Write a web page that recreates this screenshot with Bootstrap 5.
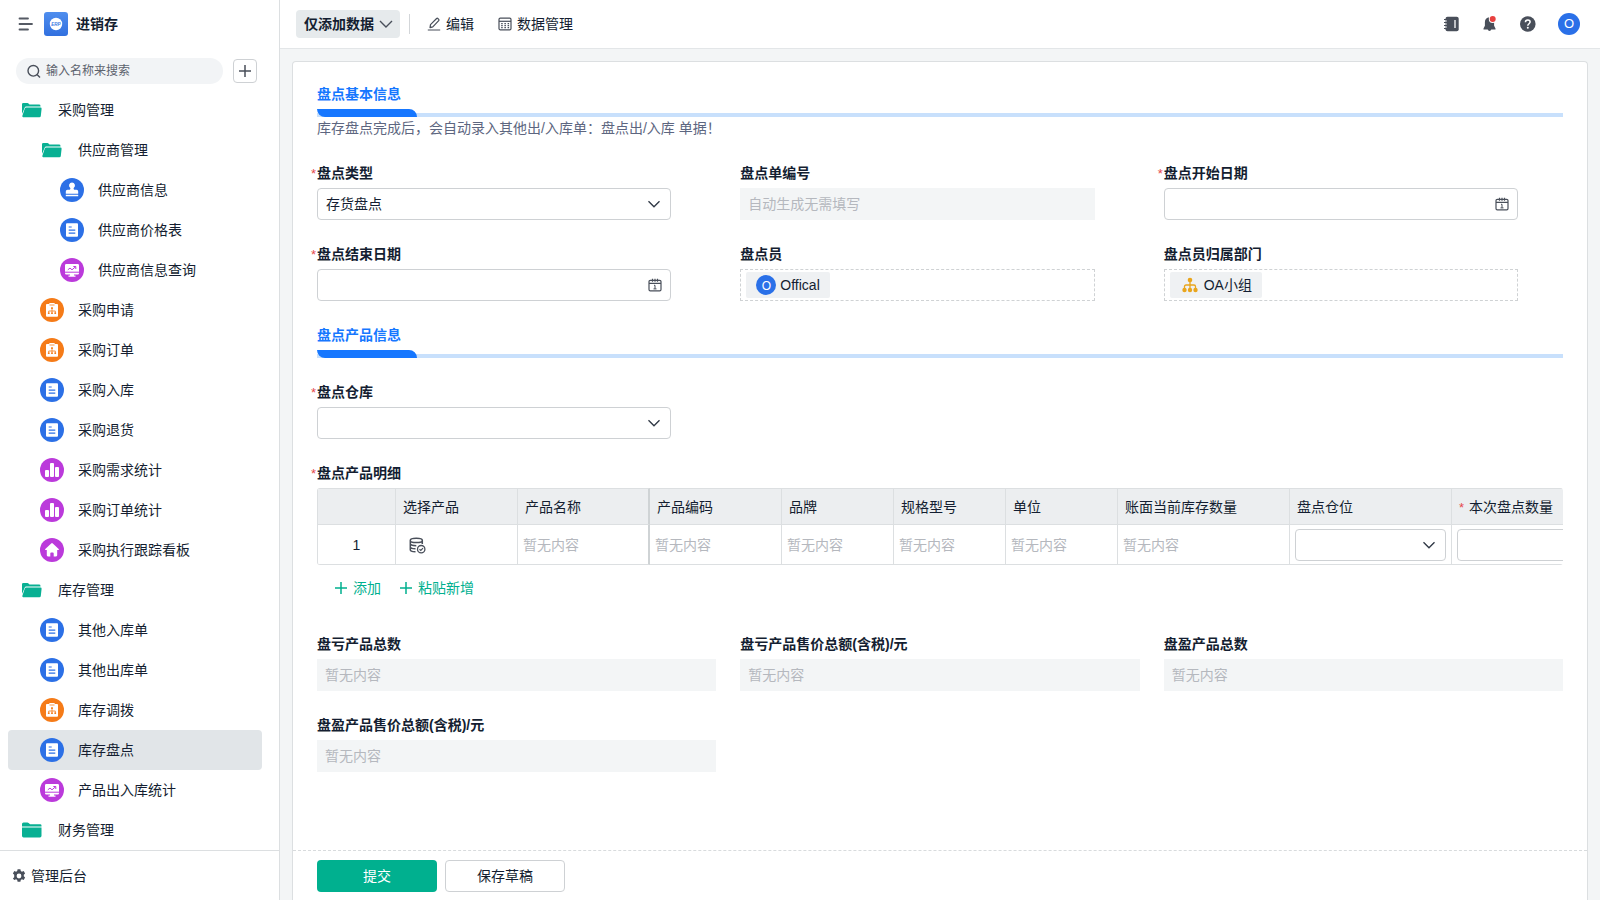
<!DOCTYPE html>
<html lang="zh-CN">
<head>
<meta charset="utf-8">
<meta name="viewport" content="width=device-width, initial-scale=1">
<title>进销存 - 库存盘点</title>
<link href="https://cdn.jsdelivr.net/npm/bootstrap@5.3.0/dist/css/bootstrap.min.css" rel="stylesheet">
<style>
:root{--ink:#141e31;--muted:#b5b8be;--line:#dcdfe1;--ctl:#ced1d4;--green:#00b08f;--blue:#1677ff;--icon:#494f5a}
body{font-family:"Liberation Sans","Noto Sans CJK SC",sans-serif;font-size:14px;line-height:22px;color:var(--ink);background:#f3f5f6}
svg{flex:none;display:block}
a{color:inherit;text-decoration:none}
.btn{--bs-btn-font-size:14px;--bs-btn-line-height:22px;--bs-btn-border-radius:4px;--bs-btn-color:var(--ink)}

/* sidebar */
.side{width:280px;flex:none;border-right:1px solid var(--line)}
.side-head{height:48px;padding:0 18px}
.app-logo{margin:0 8px 0 11px}
.app-name{font-size:14px;font-weight:600}
.search-box{height:26px;border-radius:13px;background:#f2f4f6;padding:0 10px;gap:5px;color:var(--icon)}
.search-box input{border:0;background:none;outline:0;font-size:12px;width:100%;min-width:0;padding:0;color:var(--ink)}
.search-box input::placeholder{color:#5c626d;opacity:1}
.add-btn{width:24px;height:24px;padding:0;--bs-btn-border-color:#ced1d4;--bs-btn-color:var(--icon)}
.side-search{padding:10px 22px 6px 16px;gap:10px}
.tree{padding:0 17px 0 8px;overflow-y:auto;scrollbar-width:none;min-height:0}
.tree::-webkit-scrollbar,.form-area::-webkit-scrollbar{display:none}
.tree a{height:40px;gap:14px;padding-left:32px;border-radius:4px}
.tree a.lv0{padding-left:12px}
.tree a.lv2{padding-left:52px}
.tree a.active{background:#e1e5e8}
.side-foot{height:50px;border-top:1px solid var(--line);padding:0 12px;gap:5px}

/* top bar */
.topbar{height:49px;border-bottom:1px solid #e3e6e8;padding:0 20px 0 16px}
.mode-btn{height:28px;padding:0 7px 0 8px;background:#e6eaec;font-weight:600}
.tool-btn{padding:0;gap:5px}
.divide{width:1px;height:20px;background:#d3d6d9;margin:0 17px 0 9px}
.top-icons{gap:22px;color:var(--icon)}
.face{border-radius:50%;background:#2a70e8;color:#fff;display:grid;place-items:center;flex:none}
.face-top{width:22px;height:22px;font-size:13px}
.face-chip{width:20px;height:20px;font-size:12px}

/* form */
.sheet-wrap{padding:12px 12px 0}
.sheet{border:1px solid var(--line);border-bottom:0;border-radius:4px 4px 0 0}
.form-area{padding:21px 24px;overflow-y:auto;scrollbar-width:none;min-height:0}
.stack{display:flex;flex-direction:column;gap:23px}
.row-fields{--bs-gutter-x:24px;--bs-gutter-y:23px}
.short{padding-right:45px}
.sec-title{font-size:14px;line-height:22px;font-weight:600;color:var(--blue);margin-bottom:4px}
.sec-bar{height:8px;background:linear-gradient(#fff 50%,#c8e0fc 50%)}
.sec-bar div{width:100px;height:8px;background:var(--blue);border-radius:0 8px}
.sec-note{color:#5d6680}
.lab{display:block;font-weight:600;margin-bottom:4px}
.star{display:inline-block;width:6px;margin-left:-6px;color:#e5484d;font-size:13px;line-height:14px;font-weight:400}
.form-control,.form-select{height:32px;font-size:14px;line-height:22px;padding:4px 8px;border-color:var(--ctl);border-radius:4px;color:var(--ink)}
.form-select{padding-right:32px;background-size:14px 14px;background-position:right 9px center;background-image:url("data:image/svg+xml,%3Csvg xmlns='http://www.w3.org/2000/svg' viewBox='0 0 14 14'%3E%3Cpath d='M1.5 4.2 7 9.7l5.500-5.500' fill='none' stroke='%23343c49' stroke-width='1.400'/%3E%3C/svg%3E")}
.form-control.empty,.form-control.empty:focus{background:#f3f5f6;border:0;border-radius:0}
.form-control::placeholder{color:var(--muted);opacity:1}
.date-box{border:1px solid var(--ctl);border-radius:4px;height:32px;padding-right:8px;color:var(--icon);background:#fff}
.date-box .form-control{border:0;height:30px;background:none}
.pick-box{height:32px;border:1px dashed #cfd2d4;padding:0 5px}
.chip{height:26px;border-radius:2px;background:#eff1f3;padding:0 10px;gap:4px}
.chip-icon{width:20px;display:grid;place-items:center}

/* detail table */
.grid-wrap{overflow-x:auto;scrollbar-width:none;border-left:1px solid var(--line);border-radius:3px}
.grid-wrap::-webkit-scrollbar{display:none}
.detail{table-layout:fixed;width:1296px;border-collapse:separate;border-spacing:0}
.detail th,.detail td{border-right:1px solid var(--line);border-bottom:1px solid var(--line);font-weight:400}
.detail th{height:37px;background:#eceef0;padding:0 7px;border-top:1px solid var(--line)}
.detail td{height:40px;padding:0 5px;color:var(--muted)}
.detail .pin{border-right:2px solid #cfd3d5}
.detail .num{text-align:center;color:var(--ink)}
.detail .star{width:auto;margin:0 5px 0 0}
.pick-btn{padding:0 8px;color:var(--icon)}
.row-links{padding:12px 18px 11px;gap:19px}
.row-links .btn{padding:0;border:0;gap:6px;--bs-btn-color:var(--green)}

.form-foot{border-top:1px dashed #d8dbdd;padding:9px 24px 8px;gap:8px}
.form-foot .btn{width:120px;height:32px;padding:0}
.btn-go{--bs-btn-bg:var(--green);--bs-btn-color:#fff;--bs-btn-hover-bg:#009c7f;--bs-btn-hover-color:#fff}
.btn-draft{--bs-btn-bg:#fff;--bs-btn-border-color:var(--ctl);--bs-btn-hover-bg:#f6f7f8}
.fit{min-width:0;min-height:0}
</style>
</head>
<body>
<svg class="d-none" aria-hidden="true">
  <symbol id="folder-open" viewBox="0 0 24 24"><path d="M2 6.300Q2 5 3.300 5h4.200q.6 0 1 .5l1 1.100H19q1.500 0 1.500 1.400v.6H6.300q-1.300 0-1.700 1.200L2 16z" fill="#08b093"/><path d="M6.200 9.500h14.200q1.400 0 1.200 1.300l-.8 7.200q-.2 1.200-1.400 1.200H3.200q-1.100 0-.9-1.100L4.800 10.500q.3-1 1.400-1z" fill="#08b093"/></symbol>
  <symbol id="folder-shut" viewBox="0 0 24 24"><path d="M2 8.500V6q0-1.500 1.500-1.500h4q.6 0 1.100.4l1.500 1.300h10q1.400 0 1.400 1.400v.9zM2 9.500h19.500v8.300q0 1.700-1.600 1.700H3.600Q2 19.500 2 17.800z" fill="#08b093"/></symbol>
  <symbol id="i-stamp" viewBox="0 0 24 24"><circle cx="12" cy="12" r="12" fill="#2c70e6"/><path d="M12 4.500a3 3 0 0 1 1.900 5.300c-.5.600-.4 1.700.4 1.900h2.200q1.700 0 1.700 1.700v2.400H5.800v-2.400q0-1.700 1.700-1.700h2.200c.8-.2.900-1.300.4-1.900A3 3 0 0 1 12 4.500zM5.800 16.800h12.400v1.500H5.800z" fill="#fff"/></symbol>
  <symbol id="i-doc" viewBox="0 0 24 24"><circle cx="12" cy="12" r="12" fill="#2c70e6"/><rect x="6" y="5.300" width="12" height="13.400" rx="1" fill="#fff"/><path d="M8.700 9h3M8.700 12.200h6.600M8.700 15.200h6.600" stroke="#2c70e6" stroke-width="1.200"/></symbol>
  <symbol id="i-screen" viewBox="0 0 24 24"><circle cx="12" cy="12" r="12" fill="#bb3adb"/><path d="M6.300 6h11.400q1.300 0 1.300 1.300v8q0 1.300-1.300 1.300H14v1h1.500v1.200h-7v-1.200H10v-1H6.300Q5 16.600 5 15.300v-8Q5 6 6.300 6z" fill="#fff"/><path d="m7.800 11.800 2.200-1.700 2 1.700 3.500-3M13.300 8.500h2.500V11M5 14.200h14" stroke="#bb3adb" stroke-width="1" fill="none"/></symbol>
  <symbol id="i-flow" viewBox="0 0 24 24"><circle cx="12" cy="12" r="12" fill="#f57b18"/><path d="M6.900 6H9l.7-.9h4.600l.7.900h2.100q.9 0 .9.900v10.900q0 .9-.9.900H6.900q-.9 0-.9-.9V6.900q0-.9.900-.9z" fill="#fff"/><path d="M9.500 6.600h5v.8h-5z" fill="#f57b18"/><path d="M12 10.500v4.500M8.700 15v-2h6.600v2" stroke="#f57b18" fill="none" stroke-width=".8"/><path d="M11.100 9.200h1.800V11h-1.800zM7.900 14.500h1.700v1.600H7.900zM11.100 14.500h1.800v1.600h-1.800zM14.400 14.500h1.700v1.600h-1.700z" fill="#f57b18"/></symbol>
  <symbol id="i-bars" viewBox="0 0 24 24"><circle cx="12" cy="12" r="12" fill="#bb3adb"/><rect x="5" y="12" width="4" height="7" rx="1" fill="#fff"/><rect x="10" y="5" width="4" height="14" rx="1" fill="#fff"/><rect x="15" y="9" width="4" height="10" rx="1" fill="#fff"/></symbol>
  <symbol id="i-home" viewBox="0 0 24 24"><circle cx="12" cy="12" r="12" fill="#bb3adb"/><path d="M12 5q.4 0 .8.400l5.900 5.600q.8.900-.4 1h-1.100v5.300q0 1.100-1.100 1.100h-2.400v-3q0-1-.9-1h-1.600q-.9 0-.9 1v3H7.900q-1.100 0-1.100-1.100V12H5.700q-1.200-.1-.4-1l5.900-5.600Q11.600 5 12 5z" fill="#fff"/></symbol>
  <symbol id="i-plus" viewBox="0 0 12 12"><path d="M6 0v12M0 6h12" stroke="currentColor" stroke-width="1.500"/></symbol>
  <symbol id="i-date" viewBox="0 0 14 14"><path d="M1 5.300h12M2.300 2.300h9.400q1.300 0 1.300 1.300v8q0 1.300-1.300 1.300H2.300Q1 12.900 1 11.600v-8q0-1.300 1.300-1.300zM4.500.8v3M9.500.8v3M7 .8v3" fill="none" stroke="currentColor" stroke-width="1.200"/><path d="M6 7.300h1v3.600M5.500 10.900h3" fill="none" stroke="currentColor" stroke-width="1"/></symbol>
</svg>

<div class="d-flex vh-100 overflow-hidden">
  <aside class="side bg-white d-flex flex-column">
    <header class="side-head d-flex align-items-center">
      <svg width="15" height="14" viewBox="0 0 15 14"><path d="M1.500 1.500h8.500M1.500 7h12.500M1.500 12.500h8.500" stroke="#555a64" stroke-width="1.800" stroke-linecap="round"/></svg>
      <svg class="app-logo" width="24" height="24" viewBox="0 0 24 24"><defs><linearGradient id="lg" x1="0" y1="0" x2="0" y2="1"><stop stop-color="#4f8eee"/><stop offset="1" stop-color="#3170df"/></linearGradient></defs><rect width="24" height="24" rx="3" fill="url(#lg)"/><circle cx="12" cy="12" r="6.200" fill="#fff"/><text x="12" y="13.600" text-anchor="middle" font-size="4.500" font-weight="700" font-style="italic" fill="#3b78e3">ERP</text></svg>
      <strong class="app-name">进销存</strong>
    </header>
    <div class="side-search d-flex align-items-center">
      <label class="search-box d-flex align-items-center flex-grow-1">
        <svg width="15" height="15" viewBox="0 0 15 15"><circle cx="7.300" cy="6.800" r="5.300" fill="none" stroke="currentColor" stroke-width="1.400"/><path d="m11 10.500 3 3" stroke="currentColor" stroke-width="1.400"/></svg>
        <input type="text" placeholder="输入名称来搜索" aria-label="搜索">
      </label>
      <button type="button" class="btn add-btn d-flex align-items-center justify-content-center" aria-label="新增"><svg width="12" height="12"><use href="#i-plus"/></svg></button>
    </div>
    <nav class="tree flex-grow-1">
      <a href="#" class="lv0 d-flex align-items-center"><svg width="24" height="24"><use href="#folder-open"/></svg>采购管理</a>
      <a href="#" class="d-flex align-items-center"><svg width="24" height="24"><use href="#folder-open"/></svg>供应商管理</a>
      <a href="#" class="lv2 d-flex align-items-center"><svg width="24" height="24"><use href="#i-stamp"/></svg>供应商信息</a>
      <a href="#" class="lv2 d-flex align-items-center"><svg width="24" height="24"><use href="#i-doc"/></svg>供应商价格表</a>
      <a href="#" class="lv2 d-flex align-items-center"><svg width="24" height="24"><use href="#i-screen"/></svg>供应商信息查询</a>
      <a href="#" class="d-flex align-items-center"><svg width="24" height="24"><use href="#i-flow"/></svg>采购申请</a>
      <a href="#" class="d-flex align-items-center"><svg width="24" height="24"><use href="#i-flow"/></svg>采购订单</a>
      <a href="#" class="d-flex align-items-center"><svg width="24" height="24"><use href="#i-doc"/></svg>采购入库</a>
      <a href="#" class="d-flex align-items-center"><svg width="24" height="24"><use href="#i-doc"/></svg>采购退货</a>
      <a href="#" class="d-flex align-items-center"><svg width="24" height="24"><use href="#i-bars"/></svg>采购需求统计</a>
      <a href="#" class="d-flex align-items-center"><svg width="24" height="24"><use href="#i-bars"/></svg>采购订单统计</a>
      <a href="#" class="d-flex align-items-center"><svg width="24" height="24"><use href="#i-home"/></svg>采购执行跟踪看板</a>
      <a href="#" class="lv0 d-flex align-items-center"><svg width="24" height="24"><use href="#folder-open"/></svg>库存管理</a>
      <a href="#" class="d-flex align-items-center"><svg width="24" height="24"><use href="#i-doc"/></svg>其他入库单</a>
      <a href="#" class="d-flex align-items-center"><svg width="24" height="24"><use href="#i-doc"/></svg>其他出库单</a>
      <a href="#" class="d-flex align-items-center"><svg width="24" height="24"><use href="#i-flow"/></svg>库存调拨</a>
      <a href="#" class="active d-flex align-items-center" aria-current="page"><svg width="24" height="24"><use href="#i-doc"/></svg>库存盘点</a>
      <a href="#" class="d-flex align-items-center"><svg width="24" height="24"><use href="#i-screen"/></svg>产品出入库统计</a>
      <a href="#" class="lv0 d-flex align-items-center"><svg width="24" height="24"><use href="#folder-shut"/></svg>财务管理</a>
    </nav>
    <a href="#" class="side-foot d-flex align-items-center">
      <svg width="14" height="14" viewBox="0 0 14 14"><path fill-rule="evenodd" d="M5.600.3h2.800l.4 1.800 1.100.6 1.800-.6 1.400 2.400-1.300 1.300v1.400l1.300 1.300-1.400 2.400-1.800-.6-1.100.6-.4 1.900H5.600l-.4-1.900-1.100-.6-1.800.6L.9 9.500l1.300-1.300V5.800L.9 4.500l1.400-2.400 1.800.6 1.100-.6zM7 4.600a2.400 2.400 0 1 0 0 4.800 2.400 2.400 0 0 0 0-4.800z" fill="#494f5a"/></svg>
      管理后台
    </a>
  </aside>

  <div class="fit flex-grow-1 d-flex flex-column">
    <header class="topbar bg-white d-flex align-items-center">
      <button type="button" class="btn border-0 mode-btn d-flex align-items-center">仅添加数据<svg class="ms-1" width="15" height="14" viewBox="0 0 15 14"><path d="m2 4 6 6 6-6" fill="none" stroke="#494f5a" stroke-width="1.400"/></svg></button>
      <span class="divide"></span>
      <button type="button" class="btn border-0 tool-btn d-flex align-items-center me-4"><svg width="14" height="14" viewBox="0 0 14 14"><path d="M.8 13h12.400M3 10.700l.5-3L9.600 1.500q.6-.6 1.200 0l.9.900q.6.600 0 1.200L5.800 9.900z" fill="none" stroke="#494f5a" stroke-width="1.200" stroke-linejoin="round"/></svg>编辑</button>
      <button type="button" class="btn border-0 tool-btn d-flex align-items-center"><svg width="14" height="14" viewBox="0 0 14 14"><rect x="1" y="1.200" width="12" height="11.600" rx="1.300" fill="none" stroke="#494f5a" stroke-width="1.200"/><path d="M1 4.300h12" stroke="#494f5a" stroke-width="1.200"/><path d="M3.200 6.700h8M3.200 8.700h8M3.200 10.700h8" stroke="#494f5a" stroke-width="1.200" stroke-dasharray="1.500 1.700"/></svg>数据管理</button>
      <div class="top-icons ms-auto d-flex align-items-center">
        <svg width="16" height="16" viewBox="0 0 16 16"><rect x="1.500" y=".7" width="13.200" height="14.600" rx="2" fill="currentColor"/><path d="M0 3.500h3M0 6.500h3M0 9.500h3M0 12.500h3" stroke="currentColor" stroke-width="1.200"/><path d="M1.500 5H3M1.500 8H3M1.500 11H3" stroke="#fff" stroke-width=".8"/><path d="M11 4v8" stroke="#fff" stroke-width="1.300"/></svg>
        <svg width="16" height="16" viewBox="0 0 16 16"><path d="M7.500 1.200c-3 0-4.600 2.200-4.600 4.700v3.900l-1.400 2.700v1.100h4.200a1.900 1.900 0 0 0 3.600 0h4.200v-1.100l-1.400-2.700V5.900c0-2.500-1.600-4.700-4.600-4.700z" fill="currentColor"/><circle cx="10.700" cy="3" r="3.900" fill="#fff"/><circle cx="10.700" cy="3" r="3" fill="#e8413f"/></svg>
        <svg width="16" height="16" viewBox="0 0 16 16"><circle cx="7.800" cy="8" r="7.800" fill="currentColor"/><path d="M5.400 6.300C5.400 4.800 6.500 4 7.800 4s2.300.8 2.300 2.100c0 1.600-2.300 1.700-2.300 3.600" fill="none" stroke="#fff" stroke-width="1.500"/><circle cx="7.800" cy="11.800" r="1" fill="#fff"/></svg>
        <span class="face face-top">O</span>
      </div>
    </header>

    <main class="sheet-wrap fit flex-grow-1 d-flex">
      <form class="sheet fit bg-white flex-grow-1 d-flex flex-column">
        <div class="form-area stack flex-grow-1">
          <section>
            <h2 class="sec-title">盘点基本信息</h2>
            <div class="sec-bar"><div></div></div>
            <div class="sec-note">库存盘点完成后，会自动录入其他出/入库单：盘点出/入库 单据！</div>
          </section>

          <div class="row row-fields mt-0">
            <div class="col-4 mt-0"><div class="short">
              <label class="lab" for="f-type"><span class="star">*</span>盘点类型</label>
              <select id="f-type" class="form-select"><option>存货盘点</option></select></div></div>
            <div class="col-4 mt-0"><div class="short">
              <label class="lab" for="f-no">盘点单编号</label>
              <input id="f-no" class="form-control empty" type="text" placeholder="自动生成无需填写" readonly></div></div>
            <div class="col-4 mt-0"><div class="short">
              <label class="lab" for="f-start"><span class="star">*</span>盘点开始日期</label>
              <div class="date-box d-flex align-items-center"><input id="f-start" class="form-control" type="text"><svg width="14" height="14"><use href="#i-date"/></svg></div></div></div>
            <div class="col-4"><div class="short">
              <label class="lab" for="f-end"><span class="star">*</span>盘点结束日期</label>
              <div class="date-box d-flex align-items-center"><input id="f-end" class="form-control" type="text"><svg width="14" height="14"><use href="#i-date"/></svg></div></div></div>
            <div class="col-4"><div class="short">
              <div class="lab">盘点员</div>
              <div class="pick-box d-flex align-items-center"><span class="chip d-flex align-items-center"><span class="face face-chip">O</span>Offical</span></div></div></div>
            <div class="col-4"><div class="short">
              <div class="lab">盘点员归属部门</div>
              <div class="pick-box d-flex align-items-center"><span class="chip d-flex align-items-center"><span class="chip-icon"><svg width="16" height="16" viewBox="0 0 16 16"><path d="M8 3v10M2.500 13V9.500Q2.500 8 4 8h8q1.500 0 1.500 1.500V13" fill="none" stroke="#e9a51c" stroke-width="1.300"/><circle cx="8" cy="3" r="2.300" fill="#e9a51c"/><circle cx="2.500" cy="13" r="2.200" fill="#e9a51c"/><circle cx="8" cy="13" r="2.200" fill="#e9a51c"/><circle cx="13.500" cy="13" r="2.200" fill="#e9a51c"/></svg></span>OA小组</span></div></div></div>
          </div>

          <section>
            <h2 class="sec-title">盘点产品信息</h2>
            <div class="sec-bar"><div></div></div>
          </section>

          <div class="row row-fields mt-0">
            <div class="col-4 mt-0"><div class="short">
              <label class="lab" for="f-store"><span class="star">*</span>盘点仓库</label>
              <select id="f-store" class="form-select"><option></option></select></div></div>
          </div>

          <section>
            <div class="lab"><span class="star">*</span>盘点产品明细</div>
            <div class="grid-wrap">
              <table class="detail">
                <colgroup><col style="width:78px"><col style="width:122px"><col style="width:132px"><col style="width:132px"><col style="width:112px"><col style="width:112px"><col style="width:112px"><col style="width:172px"><col style="width:162px"><col style="width:162px"></colgroup>
                <thead><tr><th></th><th>选择产品</th><th class="pin">产品名称</th><th>产品编码</th><th>品牌</th><th>规格型号</th><th>单位</th><th>账面当前库存数量</th><th>盘点仓位</th><th><span class="star">*</span>本次盘点数量</th></tr></thead>
                <tbody><tr>
                  <td class="num">1</td>
                  <td><button type="button" class="btn border-0 pick-btn" aria-label="选择产品"><svg width="17" height="17" viewBox="0 0 17 17"><path d="M13.300 7V3.300c0-1.200-2.700-2.100-6-2.100s-6 .9-6 2.100v9.500c0 1 2.200 2 5.200 2M1.300 3.400c0 1.200 2.700 2.200 6 2.200s6-1 6-2.200M1.300 6.600c0 1.200 2.700 2.100 6 2.100M1.300 9.800c0 1.100 2.300 2 5.200 2" fill="none" stroke="currentColor" stroke-width="1.500"/><circle cx="12.200" cy="12.200" r="3.700" fill="#fff" stroke="currentColor" stroke-width="1.300"/><path d="m10.500 12.200 1.300 1.200 2.200-2.200" fill="none" stroke="currentColor" stroke-width="1.200"/></svg></button></td>
                  <td class="pin">暂无内容</td><td>暂无内容</td><td>暂无内容</td><td>暂无内容</td><td>暂无内容</td><td>暂无内容</td>
                  <td><select class="form-select" aria-label="盘点仓位"><option></option></select></td>
                  <td><input class="form-control" type="text" aria-label="本次盘点数量"></td>
                </tr></tbody>
              </table>
            </div>
            <div class="row-links d-flex">
              <button type="button" class="btn d-flex align-items-center"><svg width="12" height="12"><use href="#i-plus"/></svg>添加</button>
              <button type="button" class="btn d-flex align-items-center"><svg width="12" height="12"><use href="#i-plus"/></svg>粘贴新增</button>
            </div>
          </section>

          <div class="row row-fields mt-0">
            <div class="col-4 mt-0">
              <label class="lab" for="s1">盘亏产品总数</label>
              <input id="s1" class="form-control empty" type="text" placeholder="暂无内容" readonly></div>
            <div class="col-4 mt-0">
              <label class="lab" for="s2">盘亏产品售价总额(含税)/元</label>
              <input id="s2" class="form-control empty" type="text" placeholder="暂无内容" readonly></div>
            <div class="col-4 mt-0">
              <label class="lab" for="s3">盘盈产品总数</label>
              <input id="s3" class="form-control empty" type="text" placeholder="暂无内容" readonly></div>
            <div class="col-4">
              <label class="lab" for="s4">盘盈产品售价总额(含税)/元</label>
              <input id="s4" class="form-control empty" type="text" placeholder="暂无内容" readonly></div>
          </div>
        </div>
        <footer class="form-foot d-flex">
          <button type="submit" class="btn btn-go">提交</button>
          <button type="button" class="btn btn-draft">保存草稿</button>
        </footer>
      </form>
    </main>
  </div>
</div>
<script src="https://cdn.jsdelivr.net/npm/bootstrap@5.3.0/dist/js/bootstrap.bundle.min.js"></script>
</body>
</html>
